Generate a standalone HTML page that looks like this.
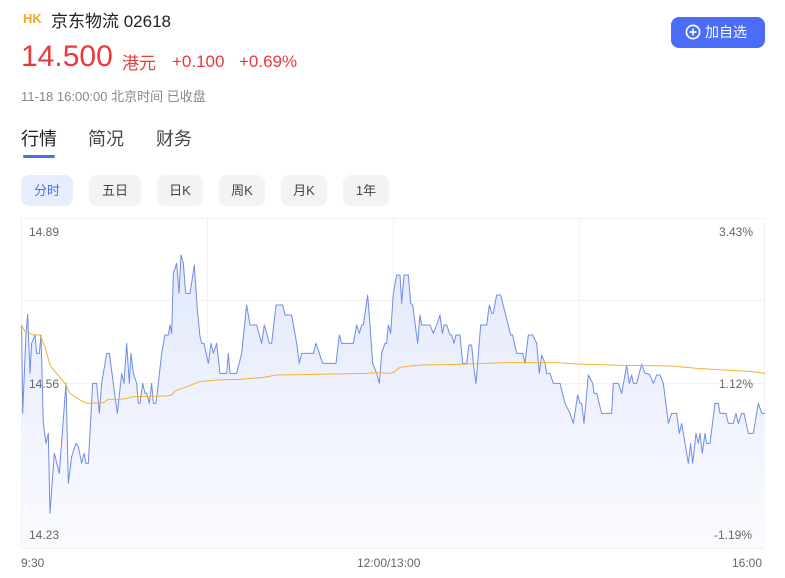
<!DOCTYPE html>
<html><head><meta charset="utf-8"><style>
*{margin:0;padding:0;box-sizing:border-box}
body{width:785px;height:578px;background:#fff;font-family:"Liberation Sans","Noto Sans CJK SC",sans-serif;position:relative;overflow:hidden;color:#222}
.a{position:absolute;white-space:nowrap}
.tab{position:absolute;top:175px;height:31px;border-radius:8px;background:#f3f3f5;font-size:13px;color:#444;text-align:center;line-height:31px}
.lbl{position:absolute;font-size:12px;color:#666}
</style></head><body>
<div class="a" style="left:23px;top:11px;font-size:13px;font-weight:bold;color:#f5a623">HK</div>
<div class="a" style="left:51px;top:7px;font-size:17px;color:#222">京东物流 02618</div>
<div class="a" style="left:21px;top:40px;font-size:30px;color:#e93a3a">14.500</div>
<div class="a" style="left:122px;top:49px;font-size:17px;color:#e93a3a">港元</div>
<div class="a" style="left:172px;top:52px;font-size:17px;color:#e93a3a">+0.100</div>
<div class="a" style="left:239px;top:52px;font-size:17px;color:#e93a3a">+0.69%</div>
<div class="a" style="left:21px;top:86px;font-size:13px;color:#888">11-18 16:00:00 北京时间 已收盘</div>
<div class="a" style="left:671px;top:17px;width:94px;height:31px;background:#4a6cf7;border-radius:8px;color:#fff;font-size:14px;line-height:31px;padding-left:14px">
<svg width="16" height="16" viewBox="0 0 16 16" style="vertical-align:-3px;margin-right:4px"><circle cx="8" cy="8" r="6.6" fill="none" stroke="#fff" stroke-width="1.7"/><path d="M8 4.6v6.8M4.6 8h6.8" stroke="#fff" stroke-width="1.7"/></svg>加自选</div>
<div class="a" style="left:21px;top:125px;font-size:18px;color:#222">行情</div>
<div class="a" style="left:88px;top:125px;font-size:18px;color:#444">简况</div>
<div class="a" style="left:156px;top:125px;font-size:18px;color:#444">财务</div>
<div class="a" style="left:23px;top:155px;width:32px;height:3px;background:#4a6cf7;border-radius:2px"></div>
<div class="tab" style="left:21px;width:52px;background:#e8edfd;color:#4a6cf7">分时</div>
<div class="tab" style="left:89px;width:52px">五日</div>
<div class="tab" style="left:157px;width:46px">日K</div>
<div class="tab" style="left:219px;width:46px">周K</div>
<div class="tab" style="left:281px;width:46px">月K</div>
<div class="tab" style="left:343px;width:46px">1年</div>
<svg class="a" style="left:0;top:0" width="785" height="578">
<defs><linearGradient id="g" x1="0" y1="0" x2="0" y2="1"><stop offset="0" stop-color="#e3e9fb"/><stop offset="1" stop-color="#fafbff"/></linearGradient></defs>
<rect x="21.5" y="218.5" width="743" height="330" fill="none" stroke="#f0f0f3"/>
<path d="M21 300.5H765M21 383.5H765M21 465.5H765M207.5 218V548M393.5 218V548M579.5 218V548" stroke="#f2f2f5"/>
<g transform="translate(0,210) scale(0.33333)">
<path fill="url(#g)" d="M65,345 L68,610 78,370 83,313 90,490 95,400 105,375 110,430 118,430 123,375 130,640 138,700 145,670 150,910 163,730 178,790 198,520 205,820 215,740 228,700 235,710 245,760 252,730 258,760 265,760 278,520 290,520 298,610 305,520 320,430 328,430 340,520 352,610 365,490 372,520 380,400 388,520 393,430 400,490 410,520 415,580 420,580 428,520 435,550 440,550 448,580 455,520 460,580 468,580 475,520 485,430 495,375 505,375 510,345 515,370 520,190 530,160 537,250 543,135 550,160 557,250 570,250 583,165 592,300 600,380 605,400 612,400 625,460 633,400 640,430 650,400 660,490 680,490 685,430 690,490 710,490 725,430 740,285 750,345 770,345 785,400 793,345 808,400 815,400 828,285 848,285 855,315 875,315 890,400 898,460 905,430 940,430 948,400 958,430 968,460 1008,460 1018,375 1025,400 1060,400 1070,345 1078,370 1085,345 1090,345 1103,255 1110,345 1118,460 1130,490 1138,520 1145,430 1155,400 1160,400 1165,345 1172,370 1180,250 1190,195 1200,195 1205,280 1212,195 1225,195 1232,280 1238,285 1253,400 1260,315 1265,345 1290,345 1300,370 1310,345 1320,315 1327,370 1333,345 1340,345 1350,375 1355,375 1362,400 1368,375 1380,375 1388,460 1400,460 1407,405 1415,405 1420,460 1428,520 1442,345 1460,345 1468,285 1475,310 1480,310 1490,255 1502,255 1532,375 1538,375 1550,430 1568,430 1575,460 1585,375 1598,375 1610,400 1618,490 1625,435 1635,460 1640,490 1650,490 1660,520 1680,520 1695,580 1710,610 1720,640 1733,555 1740,580 1745,580 1752,640 1765,495 1778,520 1782,550 1790,550 1805,610 1835,610 1840,520 1855,520 1865,550 1875,495 1880,465 1888,520 1895,495 1900,520 1910,520 1925,462 1935,490 1940,490 1950,495 1960,520 1970,495 1980,495 1990,520 2005,640 2015,610 2030,610 2038,670 2045,640 2050,670 2065,760 2072,700 2078,760 2088,670 2095,700 2100,670 2107,730 2115,670 2120,700 2130,700 2145,580 2155,580 2160,610 2178,610 2185,640 2200,640 2208,610 2215,640 2225,610 2232,610 2245,670 2260,670 2275,580 2285,610 2295,610 L2295,1014 L65,1014 Z"/>
<path fill="none" stroke="#6f8ce8" stroke-width="3" stroke-linejoin="round" d="M65,345 L68,610 78,370 83,313 90,490 95,400 105,375 110,430 118,430 123,375 130,640 138,700 145,670 150,910 163,730 178,790 198,520 205,820 215,740 228,700 235,710 245,760 252,730 258,760 265,760 278,520 290,520 298,610 305,520 320,430 328,430 340,520 352,610 365,490 372,520 380,400 388,520 393,430 400,490 410,520 415,580 420,580 428,520 435,550 440,550 448,580 455,520 460,580 468,580 475,520 485,430 495,375 505,375 510,345 515,370 520,190 530,160 537,250 543,135 550,160 557,250 570,250 583,165 592,300 600,380 605,400 612,400 625,460 633,400 640,430 650,400 660,490 680,490 685,430 690,490 710,490 725,430 740,285 750,345 770,345 785,400 793,345 808,400 815,400 828,285 848,285 855,315 875,315 890,400 898,460 905,430 940,430 948,400 958,430 968,460 1008,460 1018,375 1025,400 1060,400 1070,345 1078,370 1085,345 1090,345 1103,255 1110,345 1118,460 1130,490 1138,520 1145,430 1155,400 1160,400 1165,345 1172,370 1180,250 1190,195 1200,195 1205,280 1212,195 1225,195 1232,280 1238,285 1253,400 1260,315 1265,345 1290,345 1300,370 1310,345 1320,315 1327,370 1333,345 1340,345 1350,375 1355,375 1362,400 1368,375 1380,375 1388,460 1400,460 1407,405 1415,405 1420,460 1428,520 1442,345 1460,345 1468,285 1475,310 1480,310 1490,255 1502,255 1532,375 1538,375 1550,430 1568,430 1575,460 1585,375 1598,375 1610,400 1618,490 1625,435 1635,460 1640,490 1650,490 1660,520 1680,520 1695,580 1710,610 1720,640 1733,555 1740,580 1745,580 1752,640 1765,495 1778,520 1782,550 1790,550 1805,610 1835,610 1840,520 1855,520 1865,550 1875,495 1880,465 1888,520 1895,495 1900,520 1910,520 1925,462 1935,490 1940,490 1950,495 1960,520 1970,495 1980,495 1990,520 2005,640 2015,610 2030,610 2038,670 2045,640 2050,670 2065,760 2072,700 2078,760 2088,670 2095,700 2100,670 2107,730 2115,670 2120,700 2130,700 2145,580 2155,580 2160,610 2178,610 2185,640 2200,640 2208,610 2215,640 2225,610 2232,610 2245,670 2260,670 2275,580 2285,610 2295,610"/>
<path fill="none" stroke="#f5b133" stroke-width="3" d="M65,345 L75,365 100,375 120,375 135,410 150,465 165,485 195,520 210,550 240,570 260,580 310,578 325,568 360,568 380,565 400,560 500,558 515,555 525,543 560,530 600,515 650,510 720,508 790,502 830,495 900,494 1100,490 1130,488 1170,490 1180,488 1200,472 1230,468 1270,465 1370,463 1520,458 1670,458 1730,462 1870,466 2020,468 2090,475 2170,480 2250,484 2295,490"/>
</g>
</svg>
<div class="lbl" style="left:29px;top:225px">14.89</div>
<div class="lbl" style="left:29px;top:377px">14.56</div>
<div class="lbl" style="left:29px;top:528px">14.23</div>
<div class="lbl" style="left:719px;top:225px">3.43%</div>
<div class="lbl" style="left:719px;top:377px">1.12%</div>
<div class="lbl" style="left:714px;top:528px">-1.19%</div>
<div class="lbl" style="left:21px;top:556px">9:30</div>
<div class="lbl" style="left:357px;top:556px">12:00/13:00</div>
<div class="lbl" style="left:732px;top:556px">16:00</div>
</body></html>
